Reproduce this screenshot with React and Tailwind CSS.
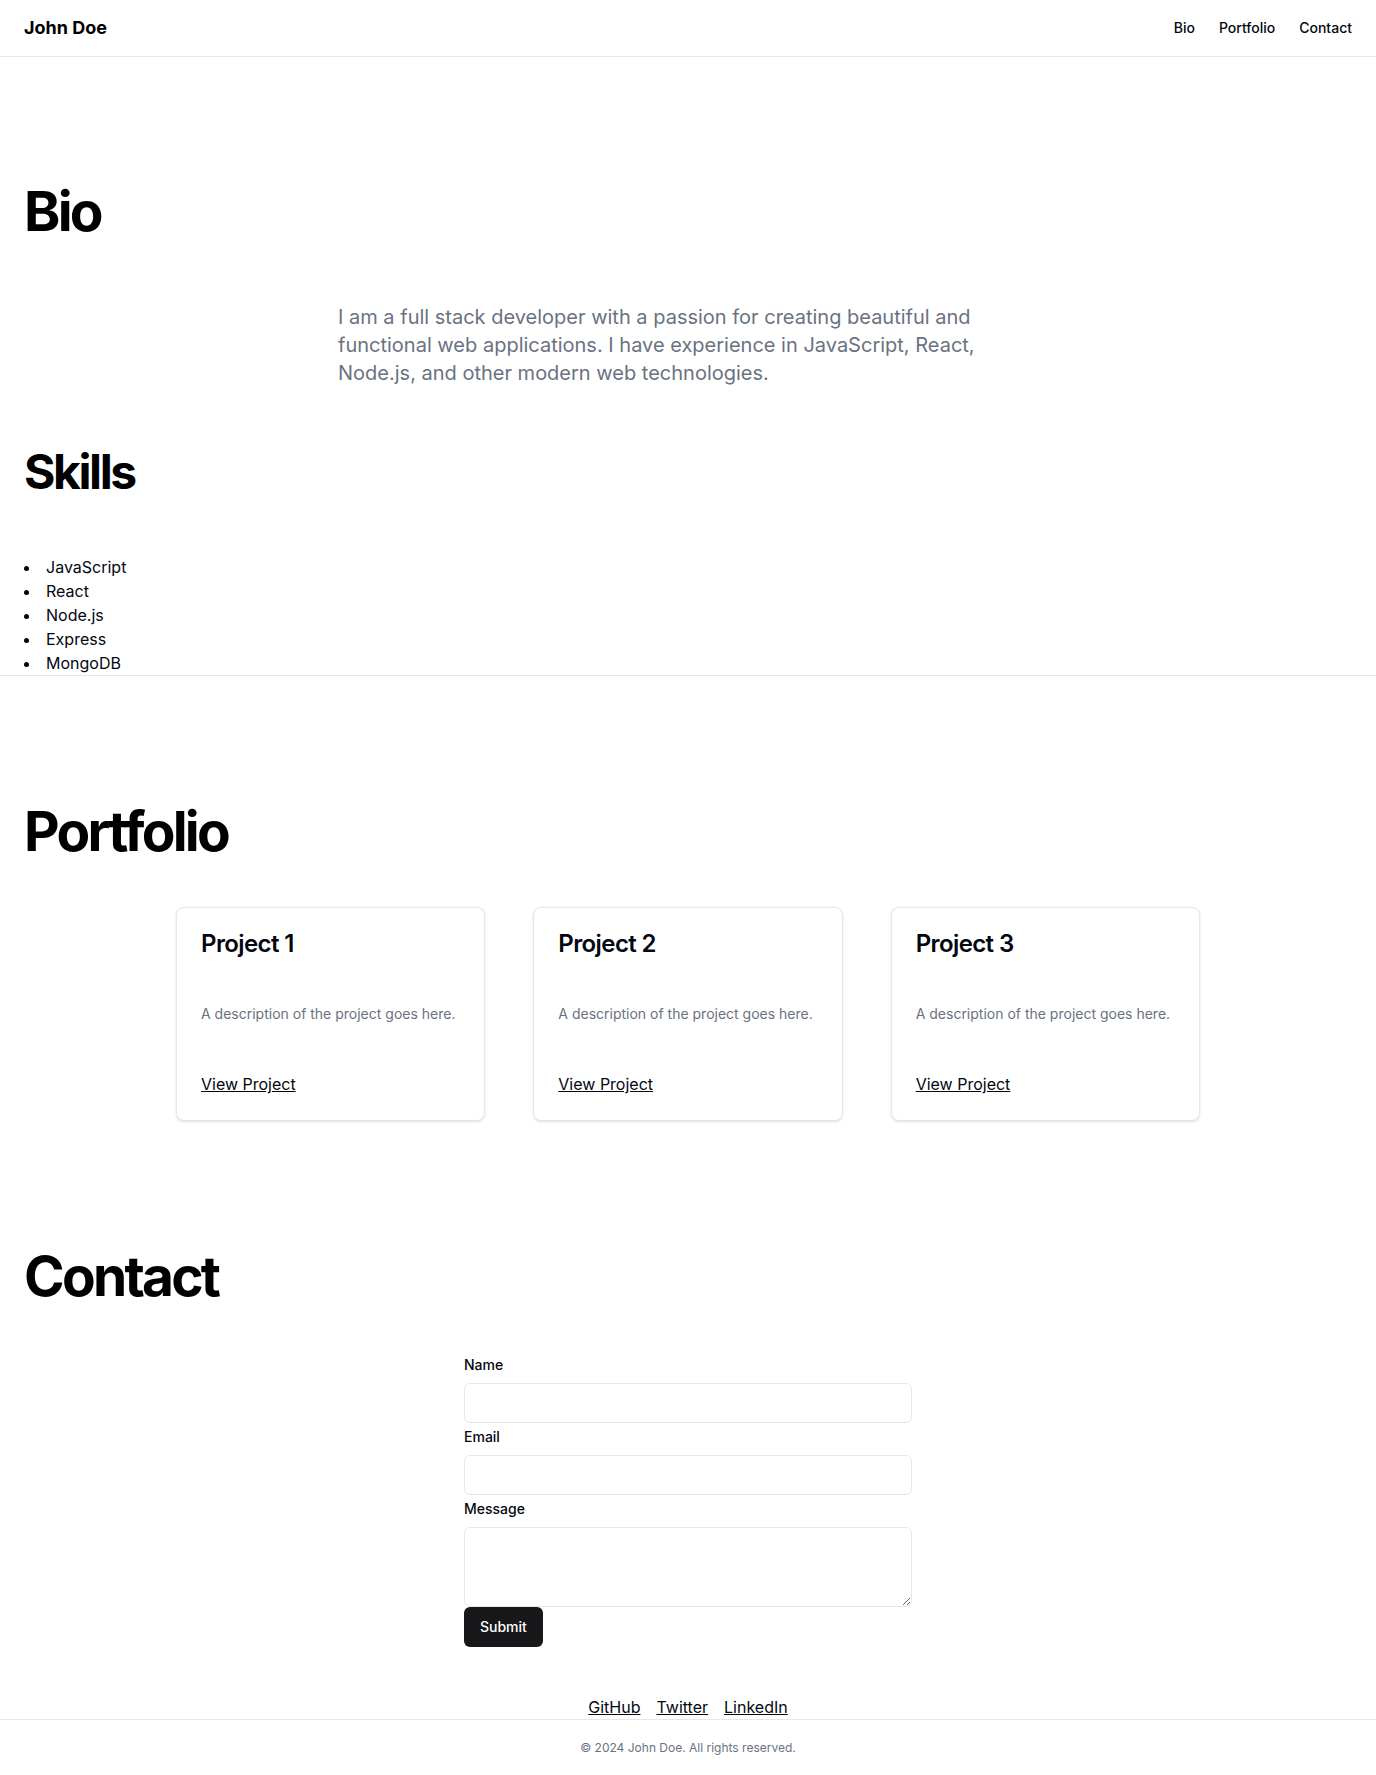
import React from "react"

const skills = ["JavaScript", "React", "Node.js", "Express", "MongoDB"]
const projects = ["Project 1", "Project 2", "Project 3"]

const ProjectCard = ({ title }) => (
  <div className="rounded-lg border border-gray-200 bg-white shadow-sm">
    <div className="p-6">
      <h3 className="text-2xl font-semibold leading-none tracking-tight text-gray-950">{title}</h3>
    </div>
    <div className="p-6">
      <p className="text-sm text-gray-500">A description of the project goes here.</p>
    </div>
    <div className="flex items-center p-6">
      <a href="#" className="text-base text-gray-950 underline">
        View Project
      </a>
    </div>
  </div>
)

const Field = ({ label, children }) => (
  <div className="mb-1">
    <label className="mb-2 block text-sm font-medium text-gray-950">{label}</label>
    {children}
  </div>
)

export default function App() {
  return (
    <div className="bg-white font-['Inter',sans-serif] text-gray-950">
      <header className="flex h-[57px] items-center justify-between border-b border-gray-200 px-6">
        <a href="#" className="text-lg font-bold text-black">
          John Doe
        </a>
        <nav className="flex gap-6 text-sm font-medium text-gray-950">
          <a href="#bio">Bio</a>
          <a href="#portfolio">Portfolio</a>
          <a href="#contact">Contact</a>
        </nav>
      </header>

      <section id="bio" className="border-b border-gray-200 px-6 pt-[127px]">
        <h2 className="mb-16 text-[55px] font-bold leading-none tracking-tighter text-black">Bio</h2>
        <p className="mx-auto max-w-[700px] text-xl leading-7 text-gray-500">
          I am a full stack developer with a passion for creating beautiful and functional web applications. I have
          experience in JavaScript, React, Node.js, and other modern web technologies.
        </p>
        <h3 className="mt-[61px] mb-[59px] text-5xl font-bold leading-none tracking-tighter text-black">Skills</h3>
        <ul className="list-inside list-disc text-base leading-6">
          {skills.map((skill) => (
            <li key={skill}>{skill}</li>
          ))}
        </ul>
      </section>

      <section id="portfolio" className="px-6 pt-[128px] pb-16">
        <h2 className="mb-12 text-[55px] font-bold leading-none tracking-tighter text-black">Portfolio</h2>
        <div className="mx-auto grid max-w-5xl grid-cols-3 gap-12">
          {projects.map((p) => (
            <ProjectCard key={p} title={p} />
          ))}
        </div>
      </section>

      <section id="contact" className="px-6 pt-[64px]">
        <h2 className="mb-[51px] text-[55px] font-bold leading-none tracking-tighter text-black">Contact</h2>
        <form className="mx-auto max-w-md" onSubmit={(e) => e.preventDefault()}>
          <Field label="Name">
            <input type="text" className="block h-10 w-full rounded-md border border-gray-200 bg-white px-3 text-sm" />
          </Field>
          <Field label="Email">
            <input type="email" className="block h-10 w-full rounded-md border border-gray-200 bg-white px-3 text-sm" />
          </Field>
          <label className="mb-2 block text-sm font-medium text-gray-950">Message</label>
          <textarea className="block h-20 w-full rounded-md border border-gray-200 bg-white px-3 py-2 text-sm" />
          <button
            type="submit"
            className="h-10 rounded-md bg-[#18181b] px-4 text-sm font-medium text-white"
          >
            Submit
          </button>
        </form>
        <div className="mt-12 flex justify-center gap-4 text-base leading-6 text-gray-950">
          <a href="#" className="underline">
            GitHub
          </a>
          <a href="#" className="underline">
            Twitter
          </a>
          <a href="#" className="underline">
            LinkedIn
          </a>
        </div>
      </section>

      <footer className="border-t border-gray-200 py-5 text-center text-xs leading-4 text-gray-500">
        © 2024 John Doe. All rights reserved.
      </footer>
    </div>
  )
}
